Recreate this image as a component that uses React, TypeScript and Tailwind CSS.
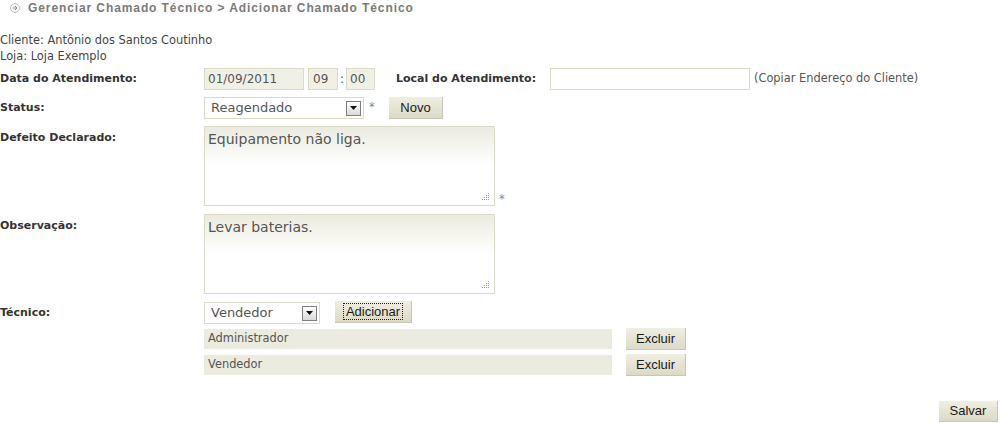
import { useState } from 'react'

const FONT = "font-['DejaVu_Sans','Verdana',sans-serif]"
const BTN =
  "bg-gradient-to-b from-[#efeee2] to-[#dcdac6] text-[#1a1a1a] text-[13px] font-['Liberation_Sans',Arial,sans-serif] border-r border-b border-r-[#c9c7b2] border-b-[#c9c7b2] flex items-center justify-center"
const BOX = 'border border-[#dcdac6] bg-[#f1f0e7] text-[#555] text-[12px]'

function Arrow() {
  return (
    <span className="w-[15px] h-[15px] border border-[#7f7f7f] bg-gradient-to-b from-white to-[#d9d9d9] flex items-center justify-center">
      <svg width="7" height="4" viewBox="0 0 7 4">
        <path d="M0 0h7L3.5 4z" fill="#111" />
      </svg>
    </span>
  )
}

function Select({ value, width }: { value: string; width: string }) {
  return (
    <div className={`${width} h-[22px] border border-[#dcdac6] bg-white flex items-center justify-between pl-[6px] pr-[2px] text-[13px] text-[#555]`}>
      <span>{value}</span>
      <Arrow />
    </div>
  )
}

function Grip() {
  return (
    <svg className="absolute right-[4px] bottom-[4px]" width="9" height="9" viewBox="0 0 9 9">
      {[
        [7, 1],
        [5, 3], [7, 3],
        [3, 5], [5, 5], [7, 5],
        [1, 7], [3, 7], [5, 7], [7, 7],
      ].map(([x, y]) => (
        <rect key={`${x}-${y}`} x={x} y={y} width="1" height="1" fill="#9a9a9a" />
      ))}
    </svg>
  )
}

function Area({ text }: { text: string }) {
  return (
    <div className="relative w-[291px] h-[80px] border border-[#dcdac6] bg-gradient-to-b from-[#ecebe0] via-white to-white px-[3px] pt-[2px] text-[14px] text-[#555]">
      {text}
      <Grip />
    </div>
  )
}

export default function App() {
  const [tecnicos] = useState(['Administrador', 'Vendedor'])

  return (
    <div className={`w-[1002px] h-[423px] bg-white relative ${FONT} text-[11.4px] text-[#444]`}>
      {/* titulo */}
      <div className="h-[16px] flex items-center pl-[10px]">
        <svg width="10" height="10" viewBox="0 0 10 10" className="mr-[8px]">
          <circle cx="5" cy="5" r="4.5" fill="none" stroke="#b5b5b5" />
          <path d="M2.5 5h4.5M5 3l2 2-2 2" fill="none" stroke="#8a8a8a" strokeWidth="1" />
        </svg>
        <span className="font-['Liberation_Sans',Arial,sans-serif] font-bold text-[12px] tracking-[0.9px] text-[#7a7a7a]">
          Gerenciar Chamado Técnico &gt; Adicionar Chamado Técnico
        </span>
      </div>

      <div className="mt-[16px] leading-[16px]">
        <div>Cliente: Antônio dos Santos Coutinho</div>
        <div>Loja: Loja Exemplo</div>
      </div>

      {/* data */}
      <div className="mt-[4px] h-[22px] flex items-center">
        <span className="w-[204px] font-bold text-[11px] text-[#333]">Data do Atendimento:</span>
        <div className={`${BOX} w-[100px] h-[22px] flex items-center pl-[3px]`}>01/09/2011</div>
        <div className={`${BOX} ml-[4px] w-[30px] h-[22px] flex items-center pl-[4px]`}>09</div>
        <span className="w-[8px] text-center text-[12px] text-[#555]">:</span>
        <div className={`${BOX} w-[29px] h-[22px] flex items-center pl-[3px]`}>00</div>
        <span className="ml-[21px] w-[154px] font-bold text-[11px] text-[#333]">Local do Atendimento:</span>
        <div className="w-[200px] h-[22px] border border-[#dcdac6] bg-white" />
        <span className="ml-[4px] text-[#555]">(Copiar Endereço do Cliente)</span>
      </div>

      {/* status */}
      <div className="mt-[7px] h-[22px] flex items-center">
        <span className="w-[204px] font-bold text-[11px] text-[#333]">Status:</span>
        <Select value="Reagendado" width="w-[160px]" />
        <span className="ml-[5px] w-[20px] text-[#888]">*</span>
        <button className={`${BTN} w-[54px] h-[22px]`}>Novo</button>
      </div>

      {/* defeito */}
      <div className="mt-[7px] flex items-start">
        <span className="w-[204px] pt-[4px] font-bold text-[11px] text-[#333]">Defeito Declarado:</span>
        <Area text="Equipamento não liga." />
        <span className="self-end ml-[4px] mb-[-2px] text-[#888]">*</span>
      </div>

      {/* observacao */}
      <div className="mt-[8px] flex items-start">
        <span className="w-[204px] pt-[4px] font-bold text-[11px] text-[#333]">Observação:</span>
        <Area text="Levar baterias." />
      </div>

      {/* tecnico */}
      <div className="mt-[8px] h-[22px] flex items-center">
        <span className="w-[204px] font-bold text-[11px] text-[#333]">Técnico:</span>
        <Select value="Vendedor" width="w-[116px]" />
        <button className={`${BTN} ml-[15px] w-[77px] h-[22px] mt-[-2px]`}>
          <span className="border border-dotted border-[#222] px-[2px] leading-[15px]">Adicionar</span>
        </button>
      </div>

      <div className="mt-[4px] flex flex-col gap-[4px]">
        {tecnicos.map(t => (
          <div key={t} className="h-[22px] flex items-center pl-[204px]">
            <div className="w-[408px] h-[20px] bg-[#ecebdf] flex items-center pl-[4px] text-[#555]">{t}</div>
            <button className={`${BTN} ml-[14px] w-[60px] h-[22px]`}>Excluir</button>
          </div>
        ))}
      </div>

      <div className="mt-[25px] flex justify-end pr-[4px]">
        <button className={`${BTN} w-[59px] h-[21px]`}>Salvar</button>
      </div>
    </div>
  )
}
